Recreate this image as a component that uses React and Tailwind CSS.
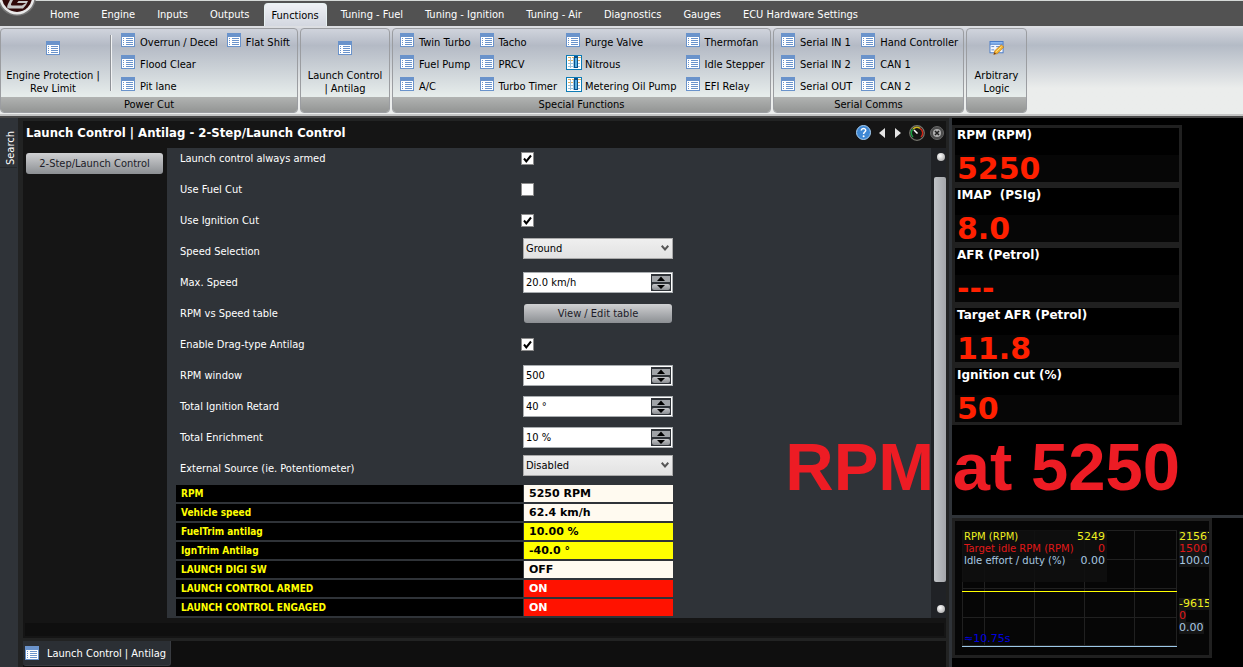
import { useState } from 'react';

const tabs = [
  'Home',
  'Engine',
  'Inputs',
  'Outputs',
  'Functions',
  'Tuning - Fuel',
  'Tuning - Ignition',
  'Tuning - Air',
  'Diagnostics',
  'Gauges',
  'ECU Hardware Settings',
];

const powerCut = [['Overrun / Decel', 'Flood Clear', 'Pit lane'], ['Flat Shift']];

const specialFunctions = [
  ['Twin Turbo', 'Fuel Pump', 'A/C'],
  ['Tacho', 'PRCV', 'Turbo Timer'],
  ['Purge Valve', 'Nitrous', 'Metering Oil Pump'],
  ['Thermofan', 'Idle Stepper', 'EFI Relay'],
];

const serialComms = [
  ['Serial IN 1', 'Serial IN 2', 'Serial OUT'],
  ['Hand Controller', 'CAN 1', 'CAN 2'],
];

const tableItems = ['Nitrous', 'Metering Oil Pump'];

const settings = [
  { id: 'armed', label: 'Launch control always armed', type: 'check', value: true },
  { id: 'fuel-cut', label: 'Use Fuel Cut', type: 'check', value: false },
  { id: 'ignition-cut', label: 'Use Ignition Cut', type: 'check', value: true },
  { id: 'speed-selection', label: 'Speed Selection', type: 'select', value: 'Ground' },
  { id: 'max-speed', label: 'Max. Speed', type: 'spin', value: '20.0 km/h' },
  { id: 'rpm-speed', label: 'RPM vs Speed table', type: 'button', value: 'View / Edit table' },
  { id: 'drag', label: 'Enable Drag-type Antilag', type: 'check', value: true },
  { id: 'rpm-window', label: 'RPM window', type: 'spin', value: '500' },
  { id: 'retard', label: 'Total Ignition Retard', type: 'spin', value: '40 °' },
  { id: 'enrichment', label: 'Total Enrichment', type: 'spin', value: '10 %' },
  { id: 'external', label: 'External Source (ie. Potentiometer)', type: 'select', value: 'Disabled' },
];

const cream = 'bg-[#fffaf0] text-black';
const yellow = 'bg-[#ffff00] text-black';
const red = 'bg-[#ff1200] text-white';

const liveValues = [
  ['RPM', '5250 RPM', cream],
  ['Vehicle speed', '62.4 km/h', cream],
  ['FuelTrim antilag', '10.00 %', yellow],
  ['IgnTrim Antilag', '-40.0 °', yellow],
  ['LAUNCH DIGI SW', 'OFF', cream],
  ['LAUNCH CONTROL ARMED', 'ON', red],
  ['LAUNCH CONTROL ENGAGED', 'ON', red],
];

const gauges = [
  ['RPM (RPM)', '5250'],
  ['IMAP  (PSIg)', '8.0'],
  ['AFR (Petrol)', '---'],
  ['Target AFR (Petrol)', '11.8'],
  ['Ignition cut (%)', '50'],
];

export default function App() {
  return (
    <div className="flex min-h-screen flex-col bg-black font-['DejaVu_Sans_Condensed','DejaVu_Sans',sans-serif] text-[11px] leading-[13px] text-black">
      <Ribbon />
      <div className="flex flex-1 bg-[#222323]">
        <SearchStrip />
        <main className="relative flex min-w-0 flex-1 flex-col">
          <Editor />
          <TaskBar />
          <p className="absolute -right-[231px] bottom-[164px] z-10 font-['Liberation_Sans',sans-serif] text-[67px] leading-[75px] font-bold whitespace-nowrap text-[#ed1c24]">
            RPM at 5250
          </p>
        </main>
        <LivePane />
      </div>
    </div>
  );
}

function Ribbon() {
  const [active, setActive] = useState('Functions');

  return (
    <header>
      <div className="relative flex h-[26px] items-end border-t border-[#d5d9d7] bg-[#525252] pl-[39px]">
        <Logo />
        <nav className="flex" role="tablist">
          {tabs.map((tab) => (
            <button
              key={tab}
              role="tab"
              aria-selected={tab === active}
              onClick={() => setActive(tab)}
              className={
                tab === active
                  ? 'mx-[3px] h-[23px] rounded-t-[4px] border border-b-0 border-[#e8f2f3] bg-linear-to-b from-[#eef0f4] to-[#d3d7e0] px-[7px] whitespace-nowrap'
                  : 'h-[23px] px-[11px] whitespace-nowrap text-white'
              }
            >
              {tab}
            </button>
          ))}
        </nav>
      </div>
      <div className="flex gap-[2px] border-y-2 border-t-[#dcdee2] border-b-[#c4c5c5] bg-linear-to-b from-[#d5d7de] from-0% via-[#b4bbc6] via-20% to-[#ebedec] to-70% pb-px">
        <Group title="Power Cut" className="w-[298px]">
          <BigItem lines={['Engine Protection |', 'Rev Limit']} className="w-[104px]" />
          <div className="mt-[6px] ml-[5px] h-[56px] w-[2px] border-l border-[#8f9297] bg-[#f2f3f4]" />
          <Columns columns={powerCut} className="pl-[9px]" />
        </Group>
        <Group className="w-[90px]">
          <BigItem lines={['Launch Control', '| Antilag']} className="w-full" />
        </Group>
        <Group title="Special Functions" className="w-[379px]">
          <Columns columns={specialFunctions} className="pl-[7px]" />
        </Group>
        <Group title="Serial Comms" className="w-[191px]">
          <Columns columns={serialComms} className="pl-[7px]" />
        </Group>
        <Group className="w-[61px]">
          <BigItem lines={['Arbitrary', 'Logic']} icon={<EditIcon />} className="w-full" />
        </Group>
      </div>
      <div className="h-[2px] bg-[#484848]" />
    </header>
  );
}

function Group({ title, className, children }) {
  return (
    <section
      className={`flex flex-none flex-col overflow-hidden rounded-[4px] border border-[#9b9da1] bg-linear-to-b from-[#d0d4dd] from-0% via-[#b4bac5] via-20% to-[#e6eceb] to-80% ${className}`}
    >
      <div className="flex h-[68px]">{children}</div>
      <h2 className="h-[15px] bg-linear-to-b from-[#b1b3b2] to-[#939594] text-center leading-[15px]">{title}</h2>
    </section>
  );
}

function BigItem({ lines, icon = <ListIcon />, className }) {
  return (
    <button className={`flex flex-col items-center pt-[12px] whitespace-nowrap ${className}`}>
      {icon}
      <span className="mt-[14px]">{lines[0]}</span>
      <span>{lines[1]}</span>
    </button>
  );
}

function Columns({ columns, className }) {
  return (
    <div className={`flex gap-[9px] pt-[4px] ${className}`}>
      {columns.map((items) => (
        <ul key={items[0]}>
          {items.map((item) => (
            <li key={item}>
              <button className="flex h-[22px] gap-[5px] whitespace-nowrap">
                {tableItems.includes(item) ? <TableIcon /> : <ListIcon />}
                <span className="pt-[3px]">{item}</span>
              </button>
            </li>
          ))}
        </ul>
      ))}
    </div>
  );
}

function SearchStrip() {
  return (
    <aside className="w-[22px] border-r-4 border-[#222323] bg-[#2f3338] pt-[12px]">
      <button className="h-[38px] w-[17px] border-b border-[#25282c] pl-[3px] text-white [writing-mode:vertical-rl]">
        <span className="block rotate-180">Search</span>
      </button>
    </aside>
  );
}

function Editor() {
  return (
    <section className="mt-[3px] mr-[3px] ml-px flex flex-1 flex-col bg-[#151515]">
      <header className="flex h-[27px] items-center pr-[2px] pb-[4px] pl-[3px]">
        <h1 className="flex-1 text-[13px] font-bold text-white">Launch Control | Antilag - 2-Step/Launch Control</h1>
        <div className="flex items-center gap-[8px]">
          <button aria-label="Help">
            <HelpIcon />
          </button>
          <button aria-label="Previous">
            <svg width="6" height="10" viewBox="0 0 6 10" fill="#e4e4e4">
              <path d="M6 0v10L0 5z" />
            </svg>
          </button>
          <button aria-label="Next" className="ml-[2px]">
            <svg width="6" height="10" viewBox="0 0 6 10" fill="#e4e4e4">
              <path d="M0 0v10l6-5z" />
            </svg>
          </button>
          <button aria-label="Gauges">
            <GaugeIcon />
          </button>
          <button aria-label="Close" className="-ml-[3px]">
            <CloseIcon />
          </button>
        </div>
      </header>
      <div className="flex flex-1">
        <nav className="w-[144px] pt-[5px] pl-[3px]">
          <button className="h-[21px] w-[137px] rounded-[3px] bg-linear-to-b from-[#d0d1d3] to-[#8c8f93] text-[#1c1c28]">
            2-Step/Launch Control
          </button>
        </nav>
        <form className="flex-1 bg-[#2f3338] pl-[9px]">
          <div className="flex w-[497px] flex-col gap-[11px]">
            {settings.map((setting) => (
              <Setting key={setting.id} {...setting} />
            ))}
          </div>
          <LiveTable />
        </form>
        <ScrollBar />
      </div>
      <div className="mx-[2px] mt-[5px] mb-[2px] h-[13px] bg-[#0f0f0f]" />
    </section>
  );
}

function Setting({ id, label, type, value }) {
  return (
    <div className="grid h-5 grid-cols-[347px_150px] grid-rows-[20px] items-center">
      <label htmlFor={id} className="pl-[4px] text-white">
        {label}
      </label>
      {type === 'check' && (
        <div className="-ml-[2px] grid size-[13px]">
          <input
            id={id}
            type="checkbox"
            defaultChecked={value}
            className="peer col-start-1 row-start-1 size-[13px] appearance-none border border-[#8c8c8c] bg-white"
          />
          <svg
            viewBox="0 0 13 13"
            className="pointer-events-none col-start-1 row-start-1 hidden size-[13px] peer-checked:block"
          >
            <path d="M3 6.5l2.3 2.8L10 3.5" fill="none" stroke="#000" strokeWidth="2" />
          </svg>
        </div>
      )}
      {type === 'select' && (
        <div className="grid pb-[6px]">
          <select
            id={id}
            className="col-start-1 row-start-1 h-[21px] appearance-none border border-[#a9a9a9] bg-linear-to-b from-[#efefef] to-[#e2e2e2] pl-[2px]"
          >
            <option>{value}</option>
          </select>
          <svg
            viewBox="0 0 8 6"
            className="pointer-events-none col-start-1 row-start-1 mr-[4px] h-[6px] w-[8px] self-center justify-self-end"
          >
            <path d="M0.7 0.8L4 4.4 7.3 0.8" fill="none" stroke="#555" strokeWidth="2" />
          </svg>
        </div>
      )}
      {type === 'spin' && (
        <div className="flex h-[21px] items-center border border-[#a9adb0] bg-white pr-px">
          <input id={id} type="text" defaultValue={value} className="min-w-0 flex-1 pl-[2px] outline-none" />
          <SpinButtons />
        </div>
      )}
      {type === 'button' && (
        <button
          id={id}
          type="button"
          className="mx-px h-[19px] rounded-[3px] bg-linear-to-b from-[#d0d1d3] to-[#8c8f93] text-[#1c1c28]"
        >
          {value}
        </button>
      )}
    </div>
  );
}

function SpinButtons() {
  return (
    <div className="flex h-[17px] w-[20px] flex-col gap-[2px] bg-[#2f3338] p-px pt-[2px]">
      <button type="button" aria-label="Increase" className="flex h-[6px] justify-center bg-[#a0a3a7]">
        <svg width="8" height="5" viewBox="0 0 8 5">
          <path d="M4 0.5L8 5H0z" />
        </svg>
      </button>
      <button
        type="button"
        aria-label="Decrease"
        className="flex h-[6px] justify-center rounded-[2px] bg-linear-to-b from-[#c5c6c9] to-[#8c8f93]"
      >
        <svg width="8" height="5" viewBox="0 0 8 5">
          <path d="M0 1h8L4 5z" />
        </svg>
      </button>
    </div>
  );
}

function LiveTable() {
  return (
    <table className="mt-[5px] w-[497px] table-fixed border-separate border-spacing-x-0 border-spacing-y-[2px] font-bold">
      <tbody>
        {liveValues.map(([name, value, tone]) => (
          <tr key={name} className="h-[17px]">
            <th
              scope="row"
              className="w-[348px] border-r border-[#2f3338] bg-black p-0 pl-[5px] text-left text-[10px] text-[#ffff00]"
            >
              {name}
            </th>
            <td className={`p-0 pl-[5px] font-['DejaVu_Sans',sans-serif] ${tone}`}>{value}</td>
          </tr>
        ))}
      </tbody>
    </table>
  );
}

function ScrollBar() {
  return (
    <div className="z-20 flex w-[15px] flex-col items-end bg-[#202226] py-[5px]" aria-hidden="true">
      <i className="mr-px size-[8px] rounded-full bg-radial-[at_40%_35%] from-white to-[#9a9a9a]" />
      <i className="mt-[16px] mb-[23px] w-[12px] flex-1 rounded-[2px] bg-linear-to-r from-[#c0c3c7] to-[#a4a6aa]" />
      <i className="mr-px size-[8px] rounded-full bg-radial-[at_40%_35%] from-white to-[#9a9a9a]" />
    </div>
  );
}

function TaskBar() {
  return (
    <footer className="mt-[3px] mr-[3px] ml-px flex h-[27px] bg-[#0f0f0f] pb-[2px]">
      <button className="flex items-center gap-[8px] rounded-b-[3px] border-r border-b border-[#383b40] bg-[#2b2f34] pr-[4px] pl-[2px] text-white">
        <ListIcon />
        Launch Control | Antilag
      </button>
    </footer>
  );
}

function LivePane() {
  return (
    <aside className="flex w-[294px] flex-col border-l-3 border-[#2f3338] bg-black">
      <div className="flex-1 border-b-3 border-[#2f3338] pt-[7px]">
        <div className="flex w-[230px] flex-col gap-[6px] bg-[#202020] p-[3px]">
          {gauges.map(([name, value]) => (
            <div
              key={name}
              className="h-[54px] bg-linear-to-b from-black from-50% to-[#060606] to-50% pl-[2px] font-['DejaVu_Sans',sans-serif] font-bold"
            >
              <h3 className="pt-px text-[12px] leading-[13px] whitespace-pre text-white">{name}</h3>
              <p className="pt-[10px] text-[30px] leading-[34px] text-[#ff2000]">{value}</p>
            </div>
          ))}
        </div>
      </div>
      <Trace />
    </aside>
  );
}

function Trace() {
  return (
    <div className="mb-[10px] flex h-[140px] w-[260px] border-3 border-[#202020] bg-[#060606] pt-[9px] pl-[7px] font-['DejaVu_Sans',sans-serif] text-[11px] leading-[12px]">
      <div className="relative h-[117px] w-[215px] flex-none">
        <svg width="215" height="117" viewBox="0 0 215 117" shapeRendering="crispEdges" fill="none">
          <g stroke="#202020">
            <path d="M0.5 0V116M22.5 0V116M72.5 0V116M122.5 0V116M172.5 0V116M214.5 0V116" />
            <path d="M0 0.5H215M0 29.5H215M0 58.5H215M0 87.5H215M0 115.5H215" />
          </g>
          <path d="M0 61h215v1H0z" fill="#ffff00" />
          <path d="M0 116h215v1H0z" fill="#9cc8e8" />
        </svg>
        <dl className="absolute top-0 left-0 grid h-[52px] w-[145px] grid-cols-[1fr_auto] content-start bg-[#101010]/90 px-[2px] pt-px text-[10px]">
          <dt className="text-[#f0f020]">RPM (RPM)</dt>
          <dd className="text-right text-[11px] text-[#f0f020]">5249</dd>
          <dt className="whitespace-nowrap text-[#e01818]">Target idle RPM (RPM)</dt>
          <dd className="text-right text-[11px] text-[#e01818]">0</dd>
          <dt className="text-[#a8c8e0]">Idle effort / duty (%)</dt>
          <dd className="text-right text-[11px] text-[#a8c8e0]">0.00</dd>
        </dl>
        <span className="absolute bottom-0 left-0 mb-[2px] pl-[2px] text-[#0000e0]">≈10.75s</span>
      </div>
      <div className="flex flex-1 flex-col justify-between overflow-hidden pt-px pb-[21px] pl-[2px]">
        <Scale values={['21567', '1500', '100.0']} />
        <Scale values={['-9615', '0', '0.00']} />
      </div>
    </div>
  );
}

function Scale({ values }) {
  return (
    <div className="flex flex-col items-start">
      <span className="bg-[#151515] text-[#f0f020]">{values[0]}</span>
      <span className="bg-[#151515] text-[#e01818]">{values[1]}</span>
      <span className="bg-[#151515] text-[#a8c8e0]">{values[2]}</span>
    </div>
  );
}

function ListIcon() {
  return (
    <svg width="14" height="14" viewBox="0 0 14 14" className="flex-none" shapeRendering="crispEdges">
      <path d="M0 0h14v14H0z" fill="#6a93cb" />
      <path d="M1 4h12v9H1z" fill="#fff" />
      <path d="M2 5h1v1H2zM2 7h1v1H2zM2 9h1v1H2zM2 11h1v1H2zM5 5h7v1H5zM5 7h7v1H5zM5 9h7v1H5zM5 11h7v1H5z" fill="#6a93cb" />
    </svg>
  );
}

function TableIcon() {
  return (
    <svg width="16" height="15" viewBox="0 0 16 15" className="-mr-[2px] flex-none" shapeRendering="crispEdges">
      <path d="M0 0h16v15H0z" fill="#0d7bb5" />
      <path d="M1 1h14v13H1z" fill="#fff" />
      <path d="M2 2h3v1H2zM6 2h2v1H6zM12 2h3v1h-3zM2 5h6v1H2zM12 5h2v1h-2z" fill="#e0b060" />
      <path d="M2 8h6v1H2zM2 11h6v1H2zM4 3h1v10H4zM7 3h1v10H7zM12 8h2v1h-2zM12 11h2v1h-2z" fill="#9cc4dc" />
      <path d="M8 1h4v12H8z" fill="#08508c" />
      <path d="M9 3h2v9H9z" fill="#58b0e0" />
    </svg>
  );
}

function EditIcon() {
  return (
    <svg width="16" height="14" viewBox="0 0 16 15" className="flex-none">
      <path d="M0 0h15v13H0z" fill="#4a7cc8" />
      <path d="M1 1h13v2H1z" fill="#8cb8f0" />
      <path d="M1 4h13v8H1z" fill="#f4f8ff" />
      <path d="M2 6h3M2 9.5h3M7 6h5" stroke="#5a80c0" />
      <path d="M4.5 14.5l1-4L12.5 4l3 2.5-7 7z" fill="#f0b030" stroke="#b07020" strokeWidth="0.6" />
      <path d="M7 11.5l6-5.5" stroke="#ffe890" />
      <path d="M4.5 14.5l0.7-2.5 1.8 1.7z" fill="#703810" />
    </svg>
  );
}

function HelpIcon() {
  return (
    <svg width="15" height="15" viewBox="0 0 15 15">
      <circle cx="7.5" cy="7.5" r="7" fill="#3f88d4" stroke="#a8d0f4" />
      <path d="M5.3 5.6C5.3 2.8 9.8 2.9 9.7 5.5 9.6 7 7.6 7.2 7.6 9" fill="none" stroke="#fff" strokeWidth="1.5" />
      <circle cx="7.6" cy="11.3" r="1" fill="#fff" />
    </svg>
  );
}

function GaugeIcon() {
  return (
    <svg width="16" height="16" viewBox="0 0 16 16" fill="none">
      <circle cx="8" cy="8" r="7.3" fill="#151515" stroke="#77776f" strokeWidth="1.2" />
      <path d="M4 12A5.5 5.5 0 0 1 4 4" stroke="#18a040" strokeWidth="1.5" />
      <path d="M4 4A5.5 5.5 0 0 1 11 3.3" stroke="#d0b820" strokeWidth="1.5" />
      <path d="M11 3.3A5.5 5.5 0 0 1 12 12" stroke="#d02818" strokeWidth="1.5" />
      <path d="M5 5l3.5 3.5" stroke="#fff" strokeWidth="1.6" />
    </svg>
  );
}

function CloseIcon() {
  return (
    <svg width="14" height="14" viewBox="0 0 14 14" fill="none">
      <circle cx="7" cy="7" r="6.5" fill="#4c4c4c" stroke="#666" />
      <circle cx="7" cy="7" r="4" fill="#b0b0b0" />
      <path d="M5 5l4 4M9 5l-4 4" stroke="#222" strokeWidth="1.6" />
    </svg>
  );
}

function Logo() {
  return (
    <svg width="37" height="17" viewBox="0 0 37 17" className="absolute -top-px left-0 z-10">
      <circle cx="17" cy="-3" r="19" fill="#777" />
      <circle cx="17" cy="-3" r="17.5" fill="#e8e8e8" />
      <circle cx="17" cy="-3" r="15" fill="#300808" />
      <path d="M10 0h3l-2 4c0 1 0 1.500 2 1.500h9L26 3h-9l1.500-2H28l-2 4-3 3.500H9C7 8.500 6.500 7 8 4z" fill="#c8c8c8" />
    </svg>
  );
}
